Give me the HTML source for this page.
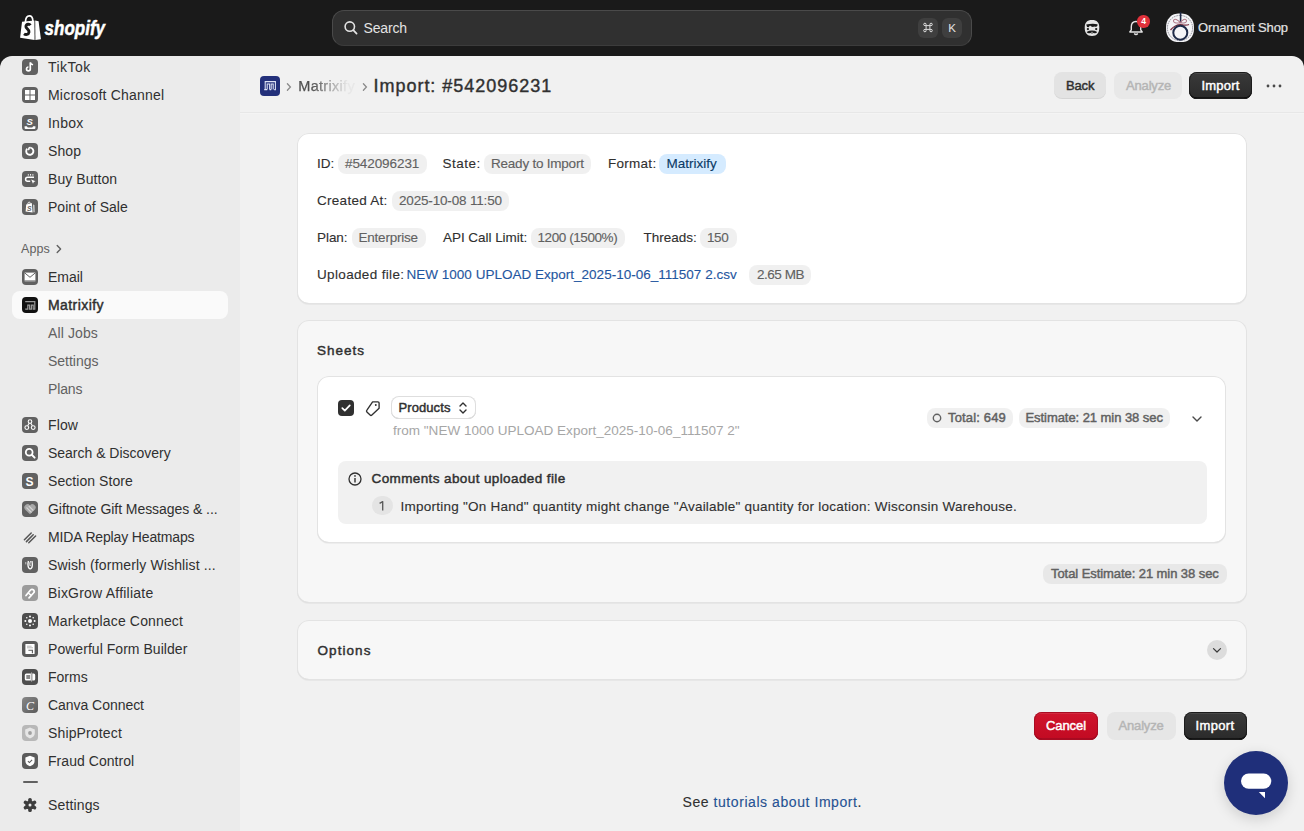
<!DOCTYPE html>
<html><head><meta charset="utf-8">
<style>
*{box-sizing:border-box;margin:0;padding:0}
html,body{width:1304px;height:831px;overflow:hidden;background:#1a1a1a;font-family:"Liberation Sans",sans-serif;color:#303030}
.abs{position:absolute}
.t{position:absolute;white-space:nowrap}
#top{position:absolute;left:0;top:0;width:1304px;height:56px;background:#1a1a1a}
#side{position:absolute;left:0;top:56px;width:240px;height:775px;background:#ebebeb;border-top-left-radius:12px;overflow:hidden}
#main{position:absolute;left:240px;top:56px;width:1064px;height:775px;background:#f1f1f1;border-top-right-radius:12px;overflow:hidden}
.nav{position:absolute;left:48px;font-size:14px;letter-spacing:0.2px;line-height:17px;color:#303030;white-space:nowrap}
.sub{position:absolute;left:48px;font-size:14px;letter-spacing:0.2px;line-height:17px;color:#616161;white-space:nowrap}
.card{position:absolute;background:#fff;border-radius:12px;box-shadow:inset 0 0 0 1px #e3e3e3, inset 0 -1px 0 #d4d4d4, 0 1px 0 rgba(0,0,0,.04)}
.bdg{position:absolute;height:20px;border-radius:8px;background:rgba(0,0,0,.06)}
.btn{position:absolute;height:28px;border-radius:8px}
</style></head><body>
<div id="top">
  <!-- shopify logo -->
  <svg class="abs" style="left:0;top:0" width="120" height="56" viewBox="0 0 120 56">
    <path d="M25.4 22.2 C25.6 18 27.4 15.9 29.4 15.9 C31.4 15.9 32.7 17.6 32.9 21" stroke="#fff" stroke-width="1.7" fill="none"/>
    <path d="M22 21.8 L34.4 20.4 L34.6 39.9 L20.1 37.7 Z" fill="#fff"/>
    <path d="M35.2 20.4 L38.6 21.2 L40.9 39.3 L35.4 39.9 Z" fill="#fff"/>
    <path d="M30.4 25.2 C29.6 24 26.4 23.6 25.9 26.3 C25.5 28.7 29.4 29.2 29 32.1 C28.6 34.9 25.6 35 24 33.8" stroke="#1a1a1a" stroke-width="2.9" fill="none"/>
    <text x="44.6" y="34.6" font-family="Liberation Sans" font-weight="bold" font-style="italic" font-size="19.7" fill="#fff" stroke="#fff" stroke-width="0.5" textLength="60.5" lengthAdjust="spacingAndGlyphs">shopify</text>
  </svg>
  <!-- search -->
  <div class="abs" style="left:332px;top:10px;width:640px;height:36px;border-radius:12px;background:#303030;border:1px solid #4a4a4a;border-bottom-color:#3c3c3c"></div>
  <svg class="abs" style="left:343px;top:20px" width="16" height="16" viewBox="0 0 16 16"><circle cx="6.8" cy="6.6" r="4.7" stroke="#e3e3e3" stroke-width="1.6" fill="none"/><path d="M10.3 10.2 L13.6 13.6" stroke="#e3e3e3" stroke-width="1.7" stroke-linecap="round"/></svg>
  <div class="abs" style="left:918px;top:17.5px;width:20px;height:20.5px;border-radius:6px;background:#3f3f3f"></div><svg class="abs" style="left:918px;top:17px" width="20" height="20" viewBox="0 0 20 20"><path transform="translate(10 10.5) scale(0.86) translate(-10 -10)" d="M7.8 7.8 H12.2 V12.2 H7.8 Z M7.8 7.8 V6.6 A1.4 1.4 0 1 0 6.6 7.8 H7.8 M12.2 7.8 V6.6 A1.4 1.4 0 1 1 13.4 7.8 H12.2 M7.8 12.2 V13.4 A1.4 1.4 0 1 1 6.6 12.2 H7.8 M12.2 12.2 V13.4 A1.4 1.4 0 1 0 13.4 12.2 H12.2" stroke="#e3e3e3" stroke-width="1.1" fill="none"/></svg>
  <div class="abs" style="left:942px;top:17.5px;width:20px;height:20.5px;border-radius:6px;background:#3f3f3f;color:#e3e3e3;font-size:11.5px;line-height:20px;text-align:center">K</div>
  <svg class="abs" style="left:1080px;top:16px" width="26" height="24" viewBox="1080 16 26 24">
    <path d="M1092 20 C1097 20 1099.3 22.5 1099.3 27.5 C1099.3 33 1097 36 1092 36 C1087 36 1084.7 33 1084.7 27.5 C1084.7 22.5 1087 20 1092 20Z" fill="#e6e6e6"/>
    <path d="M1086.2 24.6 Q1086.5 27.4 1088.6 27.3 L1090 25.6 Q1092 27.6 1094.5 26.5 Q1096.5 27.6 1097.6 25.2 L1097.4 24.2 Q1092 23.2 1086.2 24.6Z" fill="#1a1a1a"/>
    <circle cx="1087.9" cy="29.1" r="1.15" fill="#1a1a1a"/><circle cx="1096.2" cy="29.1" r="1.15" fill="#1a1a1a"/>
    <path d="M1086.6 32 Q1089 30.6 1092 30.6 Q1095 30.6 1097.2 32 Q1096 33.8 1093.8 33 Q1092 33.8 1090.2 33 Q1088 33.8 1086.6 32Z" fill="#1a1a1a"/>
    <path d="M1090.6 32.2 Q1092 31.4 1093.4 32.2 Q1092 32.9 1090.6 32.2Z" fill="#e6e6e6"/>
  </svg>
  <svg class="abs" style="left:1127px;top:19px" width="18" height="18" viewBox="0 0 18 18">
    <path d="M9 2.5 C5.8 2.5 4.3 5 4.3 7.8 V10.8 L2.8 13 H15.2 L13.7 10.8 V7.8 C13.7 5 12.2 2.5 9 2.5Z" stroke="#e3e3e3" stroke-width="1.4" fill="none" stroke-linejoin="round"/>
    <path d="M7.2 14.5 Q9 16.5 10.8 14.5" stroke="#e3e3e3" stroke-width="1.4" fill="none"/>
  </svg>
  <div class="abs" style="left:1137.3px;top:15.3px;width:12.5px;height:12.5px;border-radius:50%;background:#e0313b;color:#fff;font-size:8.5px;font-weight:bold;line-height:12.5px;text-align:center">4</div>
  <svg class="abs" style="left:1162px;top:10px" width="36" height="36" viewBox="0 0 36 36">
    <path d="M18 3.6 C23 3.6 25.5 4.5 28 7 C31 10 32 13 32 18 C32 23 31 26 28 29 C25.5 31.5 23 32 18 32 C13 32 10.5 31.5 8 29 C5 26 4 23 4 18 C4 13 5 10 8 7 C10.5 4.5 13 3.6 18 3.6Z" fill="#f4f4f7"/>
    <circle cx="18" cy="18" r="12.6" fill="none" stroke="#3a3a48" stroke-width="0.7" stroke-dasharray="1.6 0.8" opacity="0.75"/>
    <path d="M18.6 2.2 V12.8" stroke="#1e2a48" stroke-width="1.6"/>
    <path d="M18.3 12.5 C15.5 9.5 12.5 8 11.5 10.5 C11 12.5 14 13.5 18 12.8 C22 13.5 25 12.5 24.5 10.5 C23.5 8 20.5 9.5 18.3 12.5Z" stroke="#b07888" stroke-width="1.1" fill="none"/>
    <path d="M8.5 20 C12 16 17 14 21 15 C24 15.5 26 15 27 14.5" stroke="#7a3040" stroke-width="1.3" fill="none"/>
    <circle cx="18.3" cy="22.7" r="7" stroke="#1e2a48" stroke-width="2" fill="none"/>
  </svg>

</div>
<div id="side">
<div class="abs" style="left:12px;top:235px;width:216px;height:28px;border-radius:8px;background:#fafafa"></div>
<div class="abs" style="left:21px;top:185px;font-size:12.5px;line-height:16px;color:#616161;letter-spacing:0.1px">Apps</div>
<svg class="abs" style="left:54px;top:186px" width="8" height="12" viewBox="0 0 8 12"><path d="M3.2 3.6 6.6 7 3.2 10.4" stroke="#616161" stroke-width="1.4" fill="none" stroke-linecap="round" stroke-linejoin="round"/></svg>
<div class="sub" style="top:269px;letter-spacing:0.114px">All Jobs</div>
<div class="sub" style="top:297px;letter-spacing:-0.014px">Settings</div>
<div class="sub" style="top:325px;letter-spacing:-0.150px">Plans</div>
<div class="abs" style="left:22.5px;top:725px;width:15px;height:2.2px;border-radius:1.1px;background:#616161"></div>
<svg class="abs" style="left:22px;top:741px" width="16" height="16" viewBox="0 0 16 16"><g transform="translate(8 8)" fill="#3d3d3d"><circle r="4.6"/><g id="tooth"><rect x="-1.8" y="-7" width="3.6" height="4" rx="1.6"/></g><use href="#tooth" transform="rotate(60)"/><use href="#tooth" transform="rotate(120)"/><use href="#tooth" transform="rotate(180)"/><use href="#tooth" transform="rotate(240)"/><use href="#tooth" transform="rotate(300)"/></g><circle cx="8" cy="8" r="1.5" fill="#ebebeb"/></svg>
<div class="nav" style="top:741px;letter-spacing:0.143px">Settings</div>
<svg class="abs" style="left:22px;top:3px" width="16" height="16" viewBox="0 0 16 16"><rect width="16" height="16" rx="4" fill="#616161"/><path d="M8.3 3.6v6.3a1.9 1.9 0 1 1-1.9-1.9" stroke="#fff" stroke-width="1.7" fill="none"/><path d="M8.3 3.6c.4 1.3 1.4 2.1 2.8 2.2" stroke="#fff" stroke-width="1.6" fill="none"/></svg>
<div class="nav" style="top:3px;letter-spacing:0.440px">TikTok</div>
<svg class="abs" style="left:22px;top:31px" width="16" height="16" viewBox="0 0 16 16"><rect width="16" height="16" rx="4" fill="#616161"/><rect x="3" y="3" width="4.5" height="4.5" fill="#fff"/><rect x="8.5" y="3" width="4.5" height="4.5" fill="#fff"/><rect x="3" y="8.5" width="4.5" height="4.5" fill="#fff"/><rect x="8.5" y="8.5" width="4.5" height="4.5" fill="#fff"/></svg>
<div class="nav" style="top:31px;letter-spacing:0.212px">Microsoft Channel</div>
<svg class="abs" style="left:22px;top:59px" width="16" height="16" viewBox="0 0 16 16"><rect width="16" height="16" rx="4" fill="#616161"/><text x="4.6" y="10" font-family="Liberation Sans" font-weight="bold" font-style="italic" font-size="9.5" fill="#fff">S</text><path d="M2.6 11.2 h2.2 l1 1.2 h4.4 l1-1.2 h2.2 v1.8 a1 1 0 0 1 -1 1 h-8.8 a1 1 0 0 1 -1-1z" fill="#fff"/></svg>
<div class="nav" style="top:59px;letter-spacing:0.225px">Inbox</div>
<svg class="abs" style="left:22px;top:87px" width="16" height="16" viewBox="0 0 16 16"><rect width="16" height="16" rx="4" fill="#616161"/><path d="M5.3 5.6 A3.6 3.6 0 1 0 8.2 4.6" stroke="#fff" stroke-width="1.9" fill="none"/><path d="M8.2 4.6 C6.8 4.6 6.2 6 7.2 7" stroke="#fff" stroke-width="1.5" fill="none"/></svg>
<div class="nav" style="top:87px;letter-spacing:0.100px">Shop</div>
<svg class="abs" style="left:22px;top:115px" width="16" height="16" viewBox="0 0 16 16"><rect width="16" height="16" rx="4" fill="#616161"/><path d="M12 6.3H5.6a2 2 0 0 0 0 4h2.6" stroke="#fff" stroke-width="1.5" fill="none"/><path d="M9.2 8.6l4.3 1.6-1.7.8-.8 1.8z" fill="#fff"/><path d="M6.3 3.2v1.4M8.6 3v1.6M10.9 3.2v1.4" stroke="#fff" stroke-width="1"/></svg>
<div class="nav" style="top:115px;letter-spacing:0.067px">Buy Button</div>
<svg class="abs" style="left:22px;top:143px" width="16" height="16" viewBox="0 0 16 16"><rect width="16" height="16" rx="4" fill="#616161"/><path d="M4.2 5.4 L9.8 4 L10.6 13.4 L3.6 12.6 Z" fill="#fff"/><path d="M11.3 5.6 L12.3 5.9 L12.5 13.2 L11.6 13.3Z" fill="#fff"/><path d="M5.8 4.9 C5.8 2.8 8.2 2.6 8.4 4.4" stroke="#fff" stroke-width="0.9" fill="none"/><text x="5.1" y="11.6" font-family="Liberation Sans" font-weight="bold" font-style="italic" font-size="6.8" fill="#616161">S</text></svg>
<div class="nav" style="top:143px;letter-spacing:0.033px">Point of Sale</div>
<svg class="abs" style="left:22px;top:213px" width="16" height="16" viewBox="0 0 16 16"><rect width="16" height="16" rx="4" fill="#616161"/><rect x="2.6" y="3.6" width="10.8" height="8" fill="#fff"/><path d="M2.6 3.8 L8 8.3 L13.4 3.8" stroke="#616161" stroke-width="1" fill="none"/><rect x="2.6" y="11.6" width="10.8" height="1.4" fill="#8a8a8a"/></svg>
<div class="nav" style="top:213px;letter-spacing:-0.050px">Email</div>
<svg class="abs" style="left:22px;top:241px" width="16" height="16" viewBox="0 0 16 16"><rect width="16" height="16" rx="4" fill="#111"/><path d="M3.2 12.2 H5.8 V8.2 H7.6 V12.2 H9.4 V8.2 H11.2 V12.2 H12.8 V4.6 H3.2" stroke="#9a9a9a" stroke-width="1.2" fill="none"/></svg>
<div class="nav" style="top:241px;-webkit-text-stroke:0.45px #303030;letter-spacing:0.42px">Matrixify</div>
<svg class="abs" style="left:22px;top:361px" width="16" height="16" viewBox="0 0 16 16"><rect width="16" height="16" rx="4" fill="#616161"/><circle cx="8" cy="4.6" r="1.8" stroke="#fff" stroke-width="1.1" fill="none"/><circle cx="4.8" cy="10.6" r="1.9" stroke="#fff" stroke-width="1.1" fill="none"/><circle cx="11.2" cy="10.6" r="1.9" stroke="#fff" stroke-width="1.1" fill="none"/><path d="M7.2 6.3 5.6 8.8M8.8 6.3l1.6 2.5" stroke="#fff" stroke-width="1.1"/></svg>
<div class="nav" style="top:361px;letter-spacing:0.133px">Flow</div>
<svg class="abs" style="left:22px;top:389px" width="16" height="16" viewBox="0 0 16 16"><rect width="16" height="16" rx="4" fill="#616161"/><circle cx="7.2" cy="7.2" r="3.4" stroke="#fff" stroke-width="1.8" fill="none"/><path d="M9.8 9.8 12.6 12.6" stroke="#fff" stroke-width="2" stroke-linecap="round"/></svg>
<div class="nav" style="top:389px;letter-spacing:-0.012px">Search &amp; Discovery</div>
<svg class="abs" style="left:22px;top:417px" width="16" height="16" viewBox="0 0 16 16"><rect width="16" height="16" rx="4" fill="#616161"/><text x="3.6" y="12.8" font-family="Liberation Sans" font-weight="bold" font-size="12" fill="#fff">S</text></svg>
<div class="nav" style="top:417px;letter-spacing:0.067px">Section Store</div>
<svg class="abs" style="left:22px;top:445px" width="16" height="16" viewBox="0 0 16 16"><rect width="16" height="16" rx="4" fill="#616161"/><path d="M8 13.2 L3 8.4 a2.7 2.7 0 0 1 5-3.9 a2.7 2.7 0 0 1 5 3.9z" fill="#a8a8a8"/><path d="M4.5 6.5l5 5M6.8 5l4.5 4.5" stroke="#d6d6d6" stroke-width="1.1"/></svg>
<div class="nav" style="top:445px;letter-spacing:-0.056px">Giftnote Gift Messages &amp; ...</div>
<svg class="abs" style="left:22px;top:473px" width="16" height="16" viewBox="0 0 16 16"><path d="M2.4 10.8 9.2 4M4.4 12.6 11.2 5.8M6.8 13.8 13.6 7" stroke="#555" stroke-width="1.5" stroke-linecap="round"/></svg>
<div class="nav" style="top:473px;letter-spacing:-0.147px">MIDA Replay Heatmaps</div>
<svg class="abs" style="left:22px;top:501px" width="16" height="16" viewBox="0 0 16 16"><rect width="16" height="16" rx="4" fill="#616161"/><path d="M6.4 4 C5.6 7.5 5.8 11.8 8.2 11.8 C10.6 11.8 10.6 7.5 10 4" stroke="#fff" stroke-width="1.3" fill="none"/><path d="M8.2 9 C7.4 7 8 5 8.6 4.2" stroke="#fff" stroke-width="1" fill="none"/><path d="M3.8 5v2.4" stroke="#c8c8c8" stroke-width="1"/></svg>
<div class="nav" style="top:501px;letter-spacing:0.133px">Swish (formerly Wishlist ...</div>
<svg class="abs" style="left:22px;top:529px" width="16" height="16" viewBox="0 0 16 16"><rect width="16" height="16" rx="4" fill="#9c9c9c"/><path d="M4 10.5 L8.5 5 Q10 3.6 11.6 5 Q13 6.6 11.5 8 L7 12.8" stroke="#fff" stroke-width="1.7" fill="none" stroke-linecap="round"/><path d="M6.6 8.2 L9.2 10.4" stroke="#fff" stroke-width="1.5" stroke-linecap="round"/></svg>
<div class="nav" style="top:529px;letter-spacing:0.219px">BixGrow Affiliate</div>
<svg class="abs" style="left:22px;top:557px" width="16" height="16" viewBox="0 0 16 16"><rect width="16" height="16" rx="4" fill="#4e4e4e"/><circle cx="8" cy="8" r="2" fill="#fff"/><g fill="#fff"><circle cx="8" cy="3.4" r="1"/><circle cx="8" cy="12.6" r="1"/><circle cx="3.4" cy="8" r="1"/><circle cx="12.6" cy="8" r="1"/><circle cx="4.8" cy="4.8" r=".8"/><circle cx="11.2" cy="4.8" r=".8"/><circle cx="4.8" cy="11.2" r=".8"/><circle cx="11.2" cy="11.2" r=".8"/></g></svg>
<div class="nav" style="top:557px;letter-spacing:0.144px">Marketplace Connect</div>
<svg class="abs" style="left:22px;top:585px" width="16" height="16" viewBox="0 0 16 16"><rect width="16" height="16" rx="4" fill="#5a5a5a"/><rect x="3.4" y="3" width="9.2" height="10" rx=".6" fill="#fff"/><path d="M5 5.2h4.6M5 6.8h6" stroke="#b0b0b0" stroke-width=".9"/><path d="M6.4 9.2h4v3" stroke="#5a5a5a" stroke-width="1.1" fill="none"/></svg>
<div class="nav" style="top:585px;letter-spacing:0.040px">Powerful Form Builder</div>
<svg class="abs" style="left:22px;top:613px" width="16" height="16" viewBox="0 0 16 16"><rect width="16" height="16" rx="4" fill="#4e4e4e"/><rect x="2.8" y="4.4" width="10.4" height="7.2" rx="1.6" fill="#fff"/><path d="M9.6 3v10" stroke="#4e4e4e" stroke-width="1.4"/><path d="M9.6 3.4v9.2" stroke="#fff" stroke-width=".6"/><rect x="4.3" y="6" width="3.8" height="4" fill="#8a8a8a"/></svg>
<div class="nav" style="top:613px;letter-spacing:0.000px">Forms</div>
<svg class="abs" style="left:22px;top:641px" width="16" height="16" viewBox="0 0 16 16"><defs><linearGradient id="cg" x1="0" y1="0" x2="1" y2="1"><stop offset="0" stop-color="#888"/><stop offset="1" stop-color="#5a5a5a"/></linearGradient></defs><rect width="16" height="16" rx="4" fill="url(#cg)"/><text x="4" y="12.6" font-family="Liberation Serif" font-style="italic" font-size="12" fill="#fff">C</text></svg>
<div class="nav" style="top:641px;letter-spacing:-0.042px">Canva Connect</div>
<svg class="abs" style="left:22px;top:669px" width="16" height="16" viewBox="0 0 16 16"><rect width="16" height="16" rx="4" fill="#b8b8b8"/><path d="M8 2.6 L12.8 4.4 V8 c0 2.8-2 4.5-4.8 5.4 c-2.8-.9-4.8-2.6-4.8-5.4 V4.4z" fill="#e6e6e6"/><circle cx="8" cy="8" r="1.9" fill="#a0a0a0"/></svg>
<div class="nav" style="top:669px;letter-spacing:0.140px">ShipProtect</div>
<svg class="abs" style="left:22px;top:697px" width="16" height="16" viewBox="0 0 16 16"><rect width="16" height="16" rx="4" fill="#5c5c5c"/><path d="M8 2.8 L12.6 4.5 V8 c0 2.7-2 4.4-4.6 5.2 c-2.6-.8-4.6-2.5-4.6-5.2 V4.5z" fill="#fff"/><path d="M5.9 8.2l1.5 1.4 2.7-2.7" stroke="#5c5c5c" stroke-width="1.1" fill="none"/></svg>
<div class="nav" style="top:697px;letter-spacing:0.050px">Fraud Control</div>
</div>
<div id="main"></div>
<!-- header -->
<div class="abs" style="left:240px;top:112px;width:1064px;height:1px;background:#e7e7e7;box-shadow:0 1px 0 #f4f4f4"></div>
<svg class="abs" style="left:260px;top:76px" width="20" height="20" viewBox="0 0 20 20">
  <rect width="20" height="20" rx="4" fill="#23307a"/>
  <path d="M4.2 13.6 H5.2 V5.6 H15.4 V13.6 H14.2 M7.2 13.6 V8 H9.6 V13.6 M11.2 13.6 V8 H13.2 V13.6 M5.2 13.6 H7.2 M9.6 13.6 H11.2" stroke="#dfe3f5" stroke-width="1.05" fill="none"/>
</svg>
<svg class="abs" style="left:286px;top:81px" width="6" height="12" viewBox="0 0 6 12"><path d="M1.4 2.8 4.4 6 1.4 9.2" stroke="#8a8a8a" stroke-width="1.3" fill="none" stroke-linecap="round"/></svg>
<svg class="abs" style="left:362px;top:81px" width="6" height="12" viewBox="0 0 6 12"><path d="M1.4 2.8 4.4 6 1.4 9.2" stroke="#8a8a8a" stroke-width="1.3" fill="none" stroke-linecap="round"/></svg>
<div class="btn" style="left:1054px;top:72px;width:52px;height:27px;background:#e3e3e3;box-shadow:inset 0 -1px 0 rgba(0,0,0,.06)"></div>
<div class="btn" style="left:1114px;top:72px;width:68px;height:27px;background:#e8e8e8"></div>
<div class="btn" style="left:1189px;top:72px;width:63px;height:27px;background:linear-gradient(#3a3a3a,#2a2a2a);box-shadow:inset 0 0 0 1px #1c1c1c, inset 0 -1.5px 0 #000, inset 0 1.5px 0 rgba(255,255,255,.18)"></div>
<svg class="abs" style="left:1266px;top:78px" width="16" height="16" viewBox="0 0 16 16"><circle cx="2" cy="8" r="1.4" fill="#4a4a4a"/><circle cx="8" cy="8" r="1.4" fill="#4a4a4a"/><circle cx="14" cy="8" r="1.4" fill="#4a4a4a"/></svg>

<!-- card 1 -->
<div class="card" style="left:297px;top:133px;width:950px;height:171px"></div>
<div class="bdg" style="left:337.5px;top:154px;width:89px"></div>
<div class="bdg" style="left:484px;top:154px;width:107px"></div>
<div class="bdg" style="left:659px;top:154px;width:67px;background:#d5ebff"></div>
<div class="bdg" style="left:392px;top:191px;width:117px"></div>
<div class="bdg" style="left:352px;top:228px;width:73.5px"></div>
<div class="bdg" style="left:530.5px;top:228px;width:94.5px"></div>
<div class="bdg" style="left:700px;top:228px;width:36.6px"></div>
<div class="bdg" style="left:749.4px;top:265px;width:62px"></div>

<!-- card 2 -->
<div class="card" style="left:297px;top:320px;width:950px;height:283px;background:#f7f7f7"></div>
<div class="card" style="left:317px;top:376px;width:909px;height:167px"></div>
<div class="abs" style="left:338px;top:400px;width:16px;height:16px;border-radius:4px;background:#303030"></div>
<svg class="abs" style="left:338px;top:400px" width="16" height="16" viewBox="0 0 16 16"><path d="M4.3 8.2 6.8 10.7 11.8 5.3" stroke="#fff" stroke-width="1.7" fill="none" stroke-linecap="round" stroke-linejoin="round"/></svg>
<svg class="abs" style="left:364px;top:399px" width="18" height="18" viewBox="364 399 18 18"><path d="M372.6 401.8 H377.9 a1.2 1.2 0 0 1 1.2 1.2 V408.3 L371.9 415.1 a1.3 1.3 0 0 1 -1.8 0 L366.9 411.9 a1.3 1.3 0 0 1 0 -1.8 Z" stroke="#303030" stroke-width="1.35" fill="none" stroke-linejoin="round"/><circle cx="375.8" cy="405" r="0.95" fill="#303030"/></svg>
<div class="abs" style="left:391.3px;top:396px;width:85.2px;height:23.4px;border-radius:8px;background:#fff;box-shadow:inset 0 0 0 1px #dedede, inset 0 -1px 0 #c4c4c4"></div>
<svg class="abs" style="left:458px;top:401px" width="10" height="14" viewBox="0 0 10 14"><path d="M2 5 5 2 8 5M2 9 5 12 8 9" stroke="#303030" stroke-width="1.4" fill="none" stroke-linecap="round" stroke-linejoin="round"/></svg>
<div class="bdg" style="left:927px;top:408px;width:86px"></div>
<svg class="abs" style="left:932px;top:413px" width="10" height="10" viewBox="0 0 10 10"><circle cx="5" cy="5" r="3.7" stroke="#616161" stroke-width="1.4" fill="none"/></svg>
<div class="bdg" style="left:1019px;top:408px;width:150.5px"></div>
<svg class="abs" style="left:1191px;top:413px" width="12" height="12" viewBox="0 0 12 12"><path d="M2 4 6 8 10 4" stroke="#4a4a4a" stroke-width="1.4" fill="none" stroke-linecap="round" stroke-linejoin="round"/></svg>
<div class="abs" style="left:338px;top:461px;width:869px;height:62.5px;border-radius:8px;background:#f1f1f1"></div>
<svg class="abs" style="left:348px;top:472px" width="14" height="14" viewBox="0 0 14 14"><circle cx="7" cy="7" r="6" stroke="#303030" stroke-width="1.3" fill="none"/><path d="M7 6 V10.5" stroke="#303030" stroke-width="1.4"/><circle cx="7" cy="3.9" r="0.85" fill="#303030"/></svg>
<div class="abs" style="left:371.8px;top:495.8px;width:21.2px;height:19.6px;border-radius:10px;background:#e4e4e4"></div>
<svg class="abs" style="left:370px;top:494px" width="24" height="22" viewBox="370 494 24 22"><path d="M379.6 503.4 L382.7 501.6 V510.4" stroke="#5a5a5a" stroke-width="1.35" fill="none" stroke-linejoin="round"/></svg>
<div class="bdg" style="left:1042.5px;top:564px;width:184px"></div>

<!-- card 3 -->
<div class="card" style="left:297px;top:620px;width:950px;height:60px;background:#f7f7f7"></div>
<div class="abs" style="left:1207px;top:640px;width:20px;height:20px;border-radius:50%;background:#dcdcdc"></div>
<svg class="abs" style="left:1211px;top:644px" width="12" height="12" viewBox="0 0 12 12"><path d="M2.5 4.6 6 8 9.5 4.6" stroke="#3a3a3a" stroke-width="1.25" fill="none" stroke-linecap="round" stroke-linejoin="round"/></svg>

<!-- footer buttons -->
<div class="btn" style="left:1034px;top:712px;width:64px;height:28px;background:linear-gradient(#d0142c,#c20a22);box-shadow:inset 0 0 0 1px #a80c22, inset 0 -1.5px 0 #8e0b21, inset 0 1.5px 0 rgba(255,255,255,.2)"></div>
<div class="btn" style="left:1106.5px;top:712px;width:69px;background:#e6e6e6"></div>
<div class="btn" style="left:1184px;top:712px;width:63px;background:linear-gradient(#3a3a3a,#2a2a2a);box-shadow:inset 0 0 0 1px #1c1c1c, inset 0 -1.5px 0 #000, inset 0 1.5px 0 rgba(255,255,255,.18)"></div>

<!-- chat -->
<div class="abs" style="left:1224px;top:751px;width:64px;height:64px;border-radius:50%;background:#1f2f7a;box-shadow:0 4px 14px rgba(0,0,0,.15)"></div>
<svg class="abs" style="left:1224px;top:751px" width="64" height="64" viewBox="1224 751 64 64"><rect x="1241" y="773.4" width="30.3" height="15.4" rx="7.7" fill="#fff"/><path d="M1258.8 792 L1265 792 L1265 798.2 Z" fill="#fff"/></svg>

<div class="t" id="search" style="left:363.50px;top:19.15px;font-size:14px;line-height:18px;letter-spacing:-0.160px;color:#e3e3e3">Search</div>
<div class="t" id="ornament" style="left:1198.00px;top:19.50px;font-size:13px;line-height:16px;letter-spacing:-0.148px;color:#e3e3e3;-webkit-text-stroke:0.2px #e3e3e3">Ornament Shop</div>
<div class="t" id="bc" style="left:298.30px;top:76.98px;font-size:14.5px;line-height:18px;letter-spacing:0.300px;color:#4f4f4f;-webkit-text-stroke:0.25px #4f4f4f;-webkit-mask-image:linear-gradient(90deg,#000 22%,rgba(0,0,0,.06) 82%);width:60px;overflow:hidden">Matrixify</div>
<div class="t" id="title" style="left:373.50px;top:74.76px;font-size:18px;line-height:22px;letter-spacing:0.975px;color:#303030;-webkit-text-stroke:0.4px #303030">Import: #542096231</div>
<div class="t" id="back_t" style="left:1066.00px;top:77.50px;font-size:13px;line-height:16px;letter-spacing:-0.138px;color:#303030;-webkit-text-stroke:0.45px #303030">Back</div>
<div class="t" id="an_t" style="left:1126.00px;top:77.50px;font-size:13px;line-height:16px;letter-spacing:-0.167px;color:#b5b5b5;-webkit-text-stroke:0.45px #b5b5b5">Analyze</div>
<div class="t" id="imp_t" style="left:1201.50px;top:77.50px;font-size:13px;line-height:16px;letter-spacing:0.200px;color:#fff;-webkit-text-stroke:0.45px #fff">Import</div>
<div class="t" id="id_l" style="left:317.00px;top:154.82px;font-size:13.5px;line-height:17px;letter-spacing:0.000px;color:#303030;-webkit-text-stroke:0.12px #303030">ID:</div>
<div class="t" id="id_b" style="left:345.00px;top:154.82px;font-size:13.5px;line-height:17px;letter-spacing:-0.084px;color:#616161;-webkit-text-stroke:0.12px #616161">#542096231</div>
<div class="t" id="st_l" style="left:442.50px;top:154.82px;font-size:13.5px;line-height:17px;letter-spacing:0.520px;color:#303030;-webkit-text-stroke:0.12px #303030">State:</div>
<div class="t" id="st_b" style="left:491.00px;top:154.82px;font-size:13.5px;line-height:17px;letter-spacing:-0.222px;color:#616161;-webkit-text-stroke:0.12px #616161">Ready to Import</div>
<div class="t" id="fm_l" style="left:608.00px;top:154.82px;font-size:13.5px;line-height:17px;letter-spacing:0.271px;color:#303030;-webkit-text-stroke:0.12px #303030">Format:</div>
<div class="t" id="fm_b" style="left:666.50px;top:154.82px;font-size:13.5px;line-height:17px;letter-spacing:-0.013px;color:#0b3a66;-webkit-text-stroke:0.12px #0b3a66">Matrixify</div>
<div class="t" id="ca_l" style="left:317.00px;top:191.82px;font-size:13.5px;line-height:17px;letter-spacing:0.280px;color:#303030;-webkit-text-stroke:0.12px #303030">Created At:</div>
<div class="t" id="ca_b" style="left:399.00px;top:191.82px;font-size:13.5px;line-height:17px;letter-spacing:-0.170px;color:#616161;-webkit-text-stroke:0.12px #616161">2025-10-08 11:50</div>
<div class="t" id="pl_l" style="left:317.00px;top:228.82px;font-size:13.5px;line-height:17px;letter-spacing:-0.050px;color:#303030;-webkit-text-stroke:0.12px #303030">Plan:</div>
<div class="t" id="pl_b" style="left:358.50px;top:228.82px;font-size:13.5px;line-height:17px;letter-spacing:-0.222px;color:#616161;-webkit-text-stroke:0.12px #616161">Enterprise</div>
<div class="t" id="api_l" style="left:443.00px;top:228.82px;font-size:13.5px;line-height:17px;letter-spacing:-0.041px;color:#303030;-webkit-text-stroke:0.12px #303030">API Call Limit:</div>
<div class="t" id="api_b" style="left:537.50px;top:228.82px;font-size:13.5px;line-height:17px;letter-spacing:-0.420px;color:#616161;-webkit-text-stroke:0.12px #616161">1200 (1500%)</div>
<div class="t" id="th_l" style="left:643.50px;top:228.82px;font-size:13.5px;line-height:17px;letter-spacing:0.000px;color:#303030;-webkit-text-stroke:0.12px #303030">Threads:</div>
<div class="t" id="th_b" style="left:707.00px;top:228.82px;font-size:13.5px;line-height:17px;letter-spacing:-0.400px;color:#616161;-webkit-text-stroke:0.12px #616161">150</div>
<div class="t" id="up_l" style="left:317.00px;top:265.82px;font-size:13.5px;line-height:17px;letter-spacing:0.345px;color:#303030;-webkit-text-stroke:0.12px #303030">Uploaded file:</div>
<div class="t" id="up_link" style="left:406.50px;top:265.82px;font-size:13.5px;line-height:17px;letter-spacing:0.011px;color:#1f56a0;-webkit-text-stroke:0.12px #1f56a0">NEW 1000 UPLOAD Export_2025-10-06_111507 2.csv</div>
<div class="t" id="up_b" style="left:757.00px;top:265.82px;font-size:13.5px;line-height:17px;letter-spacing:-0.469px;color:#616161;-webkit-text-stroke:0.12px #616161">2.65 MB</div>
<div class="t" id="sheets" style="left:317.00px;top:341.82px;font-size:13.5px;line-height:17px;letter-spacing:1.000px;color:#303030;-webkit-text-stroke:0.45px #303030">Sheets</div>
<div class="t" id="products" style="left:398.50px;top:399.50px;font-size:13px;line-height:16px;letter-spacing:0.087px;color:#303030;-webkit-text-stroke:0.45px #303030">Products</div>
<div class="t" id="from" style="left:393.00px;top:421.82px;font-size:13.5px;line-height:17px;letter-spacing:0.012px;color:#a6a6a6">from "NEW 1000 UPLOAD Export_2025-10-06_111507 2"</div>
<div class="t" id="total_t" style="left:948.00px;top:409.50px;font-size:13px;line-height:16px;letter-spacing:0.164px;color:#616161;-webkit-text-stroke:0.45px #616161">Total: 649</div>
<div class="t" id="est_t" style="left:1025.50px;top:409.50px;font-size:13px;line-height:16px;letter-spacing:-0.061px;color:#616161;-webkit-text-stroke:0.45px #616161">Estimate: 21 min 38 sec</div>
<div class="t" id="comments" style="left:371.50px;top:469.82px;font-size:13.5px;line-height:17px;letter-spacing:0.391px;color:#303030;-webkit-text-stroke:0.45px #303030">Comments about uploaded file</div>
<div class="t" id="importing" style="left:400.50px;top:497.82px;font-size:13.5px;line-height:17px;letter-spacing:0.241px;color:#303030;-webkit-text-stroke:0.12px #303030">Importing "On Hand" quantity might change "Available" quantity for location: Wisconsin Warehouse.</div>
<div class="t" id="totest_t" style="left:1051.00px;top:565.50px;font-size:13px;line-height:16px;letter-spacing:-0.071px;color:#616161;-webkit-text-stroke:0.45px #616161">Total Estimate: 21 min 38 sec</div>
<div class="t" id="options" style="left:317.50px;top:641.82px;font-size:13.5px;line-height:17px;letter-spacing:1.064px;color:#303030;-webkit-text-stroke:0.45px #303030">Options</div>
<div class="t" id="cancel_t" style="left:1046.00px;top:717.50px;font-size:13px;line-height:16px;letter-spacing:-0.080px;color:#fff;-webkit-text-stroke:0.45px #fff">Cancel</div>
<div class="t" id="an2_t" style="left:1118.50px;top:717.50px;font-size:13px;line-height:16px;letter-spacing:-0.168px;color:#b5b5b5;-webkit-text-stroke:0.45px #b5b5b5">Analyze</div>
<div class="t" id="imp2_t" style="left:1195.50px;top:717.50px;font-size:13px;line-height:16px;letter-spacing:0.360px;color:#fff;-webkit-text-stroke:0.45px #fff">Import</div>
<div class="t" id="see" style="left:682.50px;top:793.15px;font-size:14px;line-height:18px;letter-spacing:0.565px;color:#303030;-webkit-text-stroke:0.12px #303030">See <span style="color:#1f56a0">tutorials about Import</span>.</div>
</body></html>
